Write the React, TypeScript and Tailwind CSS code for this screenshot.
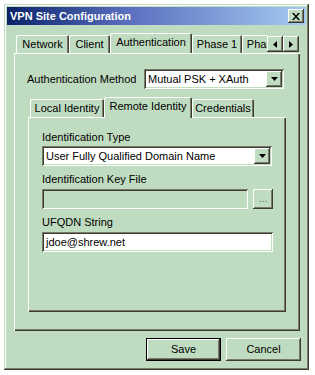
import React from 'react';

// classic 3D borders drawn with inset shadows
const raised =
  'shadow-[inset_-1px_-1px_#3c3c30,inset_1px_1px_#ffffff,inset_-2px_-2px_#7a7a6a]';
const windowFrame =
  'shadow-[inset_-1px_-1px_#3c3c30,inset_1px_1px_#c0dcc0,inset_-2px_-2px_#7a7a6a,inset_2px_2px_#ffffff]';
const sunken =
  'shadow-[inset_1px_1px_#7a7a6a,inset_-1px_-1px_#ffffff,inset_2px_2px_#3c3c30,inset_-2px_-2px_#c0dcc0]';
const panelEdge =
  'shadow-[inset_1px_1px_#ffffff,inset_-1px_-1px_#3c3c30,inset_-2px_-2px_#7a7a6a]';

function DownArrow() {
  return (
    <svg width="7" height="4" viewBox="0 0 7 4">
      <path d="M0 0h7L3.5 4z" fill="#000" />
    </svg>
  );
}

function Combo({ value, width }: { value: string; width: string }) {
  return (
    <div className={`${sunken} ${width} h-[20px] bg-white flex items-center p-[2px]`}>
      <span className="flex-1 pl-[2px] whitespace-nowrap">{value}</span>
      <div className={`${raised} bg-[#c0dcc0] w-[16px] h-[16px] flex items-center justify-center`}>
        <DownArrow />
      </div>
    </div>
  );
}

function Tab({ label, width, selected }: { label: string; width: string; selected?: boolean }) {
  if (selected) {
    return (
      <div
        className={`relative z-10 -mb-px h-[21px] ${width} shrink-0 bg-[#c0dcc0] rounded-t-[2px] shadow-[inset_1px_1px_#ffffff,inset_-1px_0_#3c3c30,inset_-2px_0_#7a7a6a] flex items-start justify-center pt-[3px]`}
      >
        {label}
      </div>
    );
  }
  return (
    <div
      className={`h-[18px] ${width} shrink-0 bg-[#c0dcc0] rounded-t-[2px] shadow-[inset_1px_1px_#ffffff,inset_-1px_0_#3c3c30,inset_-2px_0_#7a7a6a] flex items-start justify-center pt-[3px] whitespace-nowrap overflow-hidden`}
    >
      {label}
    </div>
  );
}

function ScrollArrow({ dir }: { dir: 'left' | 'right' }) {
  return (
    <div className={`${raised} bg-[#c0dcc0] w-[16px] h-[16px] flex items-center justify-center`}>
      <svg width="4" height="7" viewBox="0 0 4 7">
        {dir === 'left' ? <path d="M4 0v7L0 3.5z" fill="#000" /> : <path d="M0 0v7l4-3.5z" fill="#000" />}
      </svg>
    </div>
  );
}

function Button({ label, isDefault }: { label: string; isDefault?: boolean }) {
  return (
    <div
      className={`w-[75px] h-[23px] bg-[#c0dcc0] flex items-center justify-center ${
        isDefault
          ? 'shadow-[inset_0_0_0_1px_#000000,inset_-2px_-2px_#3c3c30,inset_2px_2px_#ffffff,inset_-3px_-3px_#7a7a6a]'
          : raised
      }`}
    >
      {label}
    </div>
  );
}

export default function App() {
  return (
    <div className="w-[315px] h-[375px] bg-white pt-[4px] pl-[4px] font-['Liberation_Sans',Arial,sans-serif] text-[11px] text-black leading-[13px]">
      <div className={`${windowFrame} w-[305px] h-[366px] bg-[#c0dcc0] p-[3px] flex flex-col`}>
        {/* title bar */}
        <div className="h-[18px] bg-gradient-to-r from-[#0a246a] via-[#5a6fbf] via-40% to-[#a6caf0] flex items-center justify-between pl-[3px] pr-[2px]">
          <span className="text-white font-bold">VPN Site Configuration</span>
          <div className={`${raised} bg-[#c0dcc0] w-[16px] h-[14px] flex items-center justify-center`}>
            <svg width="8" height="7" viewBox="0 0 8 7">
              <path d="M0 0h2l2 2.5L6 0h2L5 3.5 8 7H6L4 4.5 2 7H0l3-3.5z" fill="#000" />
            </svg>
          </div>
        </div>

        <div className="pl-[7px] pr-[6px] pt-[8px] flex flex-col">
          {/* outer tab strip */}
          <div className="h-[20px] flex items-end pl-[2px]">
            <div className="flex items-end w-[251px] overflow-hidden">
              <Tab label="Network" width="w-[53px]" />
              <Tab label="Client" width="w-[41px]" />
              <Tab label="Authentication" width="w-[82px]" selected />
              <Tab label="Phase 1" width="w-[50px]" />
              <Tab label="Phase 2" width="w-[50px]" />
            </div>
            <div className="flex self-start mt-[3px]">
              <ScrollArrow dir="left" />
              <ScrollArrow dir="right" />
            </div>
          </div>

          {/* outer panel */}
          <div className={`${panelEdge} h-[278px] w-[286px] pt-[16px] pl-[13px]`}>
            <div className="flex items-center">
              <span className="w-[117px]">Authentication Method</span>
              <Combo value="Mutual PSK + XAuth" width="w-[140px]" />
            </div>

            <div className="mt-[8px] ml-px">
              <div className="h-[20px] flex items-end pl-[2px]">
                <Tab label="Local Identity" width="w-[74px]" />
                <Tab label="Remote Identity" width="w-[88px]" selected />
                <Tab label="Credentials" width="w-[62px]" />
              </div>
              <div className={`${panelEdge} h-[195px] w-[258px] pt-[14px] pl-[14px]`}>
                <div>Identification Type</div>
                <div className="mt-[2px]">
                  <Combo value="User Fully Qualified Domain Name" width="w-[230px]" />
                </div>

                <div className="mt-[7px]">Identification Key File</div>
                <div className="mt-[3px] flex gap-[5px]">
                  <div className={`${sunken} w-[206px] h-[20px] bg-[#c0dcc0]`} />
                  <div className={`${raised} w-[20px] h-[20px] bg-[#c0dcc0] flex items-center justify-center text-[#7a7a6a] pb-[2px]`}>
                    ...
                  </div>
                </div>

                <div className="mt-[7px]">UFQDN String</div>
                <div className={`${sunken} mt-[3px] w-[231px] h-[20px] bg-white flex items-center pl-[4px]`}>
                  jdoe@shrew.net
                </div>
              </div>
            </div>
          </div>

          {/* buttons */}
          <div className="mt-[7px] flex justify-end gap-[5px] -mr-px">
            <Button label="Save" isDefault />
            <Button label="Cancel" />
          </div>
        </div>
      </div>
    </div>
  );
}
